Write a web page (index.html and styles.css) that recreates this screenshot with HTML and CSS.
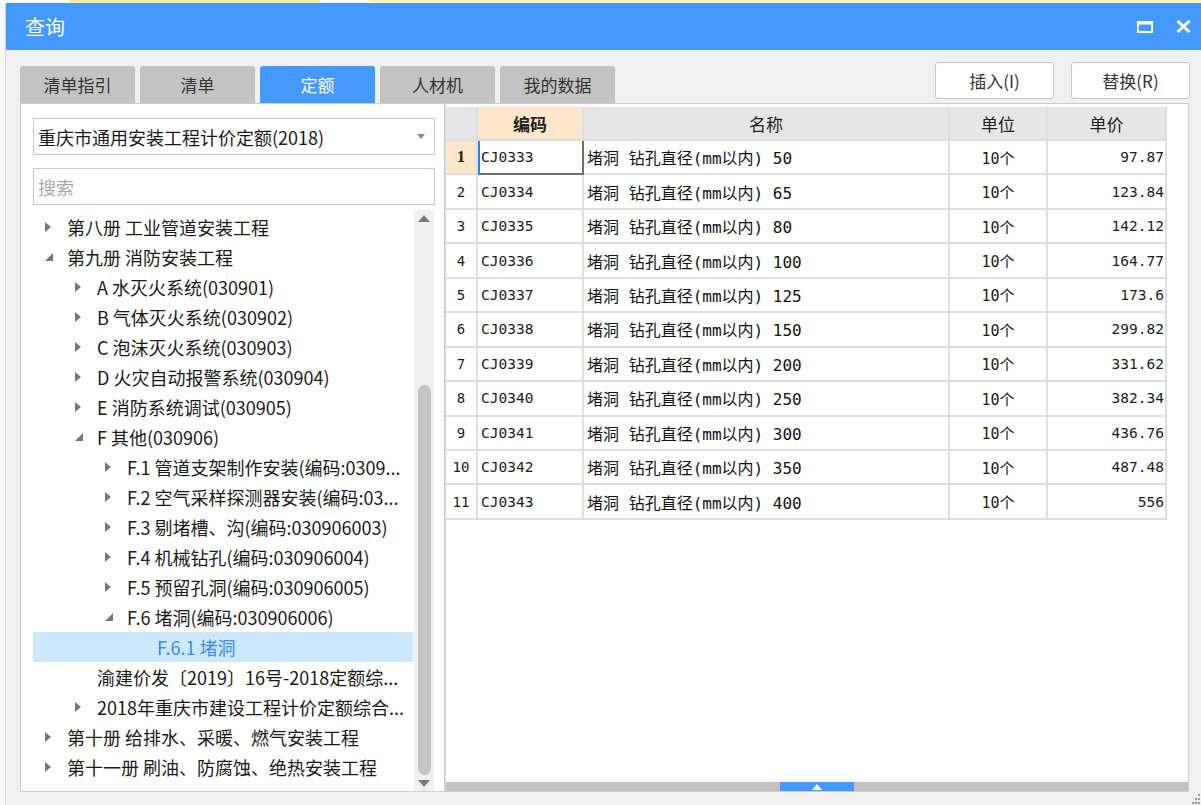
FILE: index.html
```html
<!DOCTYPE html>
<html lang="zh-CN">
<head>
<meta charset="utf-8">
<title>查询</title>
<link rel="stylesheet" href="styles.css">
</head>
<body>
<div class="topstrip"><span class="seg s1"></span><span class="seg s2"></span><span class="seg s3"></span><span class="seg s4"></span></div>
<div class="window">
  <div class="titlebar">
    <span class="title">查询</span>
    <div class="controls">
      <svg width="16" height="12" viewBox="0 0 16 12"><rect x="1" y="1.5" width="14" height="9.5" fill="none" stroke="#fff" stroke-width="2"/><rect x="0" y="0" width="16" height="3.5" fill="#fff"/></svg>
      <svg width="15" height="13" viewBox="0 0 15 13"><path d="M1.5 1 L13.5 12 M13.5 1 L1.5 12" stroke="#fff" stroke-width="3" fill="none"/></svg>
    </div>
  </div>
  <div class="main">
    <div class="toolbar">
      <div class="tabs">
        <div class="tab">清单指引</div>
        <div class="tab">清单</div>
        <div class="tab active">定额</div>
        <div class="tab">人材机</div>
        <div class="tab">我的数据</div>
      </div>
      <div class="buttons">
        <div class="btn">插入(I)</div>
        <div class="btn">替换(R)</div>
      </div>
    </div>
    <div class="panels">
      <div class="left">
        <div class="select"><span>重庆市通用安装工程计价定额(2018)</span><svg width="8" height="5" viewBox="0 0 8 5"><path d="M0 0 H8 L4 5 Z" fill="#888"/></svg></div>
        <div class="search">搜索</div>
        <div class="treewrap">
          <div class="tree">
            <div class="row l0"><span class="tw"><svg width="6" height="10" viewBox="0 0 6 10"><path d="M0 0 L6 5 L0 10 Z" fill="#777"/></svg></span><span class="tx">第八册 工业管道安装工程</span></div>
            <div class="row l0"><span class="tw"><svg width="8" height="8" viewBox="0 0 8 8"><path d="M8 0 V8 H0 Z" fill="#777"/></svg></span><span class="tx">第九册 消防安装工程</span></div>
            <div class="row l1"><span class="tw"><svg width="6" height="10" viewBox="0 0 6 10"><path d="M0 0 L6 5 L0 10 Z" fill="#777"/></svg></span><span class="tx">A 水灭火系统(030901)</span></div>
            <div class="row l1"><span class="tw"><svg width="6" height="10" viewBox="0 0 6 10"><path d="M0 0 L6 5 L0 10 Z" fill="#777"/></svg></span><span class="tx">B 气体灭火系统(030902)</span></div>
            <div class="row l1"><span class="tw"><svg width="6" height="10" viewBox="0 0 6 10"><path d="M0 0 L6 5 L0 10 Z" fill="#777"/></svg></span><span class="tx">C 泡沫灭火系统(030903)</span></div>
            <div class="row l1"><span class="tw"><svg width="6" height="10" viewBox="0 0 6 10"><path d="M0 0 L6 5 L0 10 Z" fill="#777"/></svg></span><span class="tx">D 火灾自动报警系统(030904)</span></div>
            <div class="row l1"><span class="tw"><svg width="6" height="10" viewBox="0 0 6 10"><path d="M0 0 L6 5 L0 10 Z" fill="#777"/></svg></span><span class="tx">E 消防系统调试(030905)</span></div>
            <div class="row l1"><span class="tw"><svg width="8" height="8" viewBox="0 0 8 8"><path d="M8 0 V8 H0 Z" fill="#777"/></svg></span><span class="tx">F 其他(030906)</span></div>
            <div class="row l2"><span class="tw"><svg width="6" height="10" viewBox="0 0 6 10"><path d="M0 0 L6 5 L0 10 Z" fill="#777"/></svg></span><span class="tx">F.1 管道支架制作安装(编码:0309...</span></div>
            <div class="row l2"><span class="tw"><svg width="6" height="10" viewBox="0 0 6 10"><path d="M0 0 L6 5 L0 10 Z" fill="#777"/></svg></span><span class="tx">F.2 空气采样探测器安装(编码:03...</span></div>
            <div class="row l2"><span class="tw"><svg width="6" height="10" viewBox="0 0 6 10"><path d="M0 0 L6 5 L0 10 Z" fill="#777"/></svg></span><span class="tx">F.3 剔堵槽、沟(编码:030906003)</span></div>
            <div class="row l2"><span class="tw"><svg width="6" height="10" viewBox="0 0 6 10"><path d="M0 0 L6 5 L0 10 Z" fill="#777"/></svg></span><span class="tx">F.4 机械钻孔(编码:030906004)</span></div>
            <div class="row l2"><span class="tw"><svg width="6" height="10" viewBox="0 0 6 10"><path d="M0 0 L6 5 L0 10 Z" fill="#777"/></svg></span><span class="tx">F.5 预留孔洞(编码:030906005)</span></div>
            <div class="row l2"><span class="tw"><svg width="8" height="8" viewBox="0 0 8 8"><path d="M8 0 V8 H0 Z" fill="#777"/></svg></span><span class="tx">F.6 堵洞(编码:030906006)</span></div>
            <div class="row l3 selected"><span class="tw"></span><span class="tx">F.6.1 堵洞</span></div>
            <div class="row l1"><span class="tw"></span><span class="tx">渝建价发〔2019〕16号-2018定额综...</span></div>
            <div class="row l1"><span class="tw"><svg width="6" height="10" viewBox="0 0 6 10"><path d="M0 0 L6 5 L0 10 Z" fill="#777"/></svg></span><span class="tx">2018年重庆市建设工程计价定额综合...</span></div>
            <div class="row l0"><span class="tw"><svg width="6" height="10" viewBox="0 0 6 10"><path d="M0 0 L6 5 L0 10 Z" fill="#777"/></svg></span><span class="tx">第十册 给排水、采暖、燃气安装工程</span></div>
            <div class="row l0"><span class="tw"><svg width="6" height="10" viewBox="0 0 6 10"><path d="M0 0 L6 5 L0 10 Z" fill="#777"/></svg></span><span class="tx">第十一册 刷油、防腐蚀、绝热安装工程</span></div>
          </div>
          <div class="vscroll">
            <svg class="sarrow" width="12" height="7" viewBox="0 0 12 7"><path d="M0 7 L6 0 L12 7 Z" fill="#7a7a7a"/></svg>
            <div class="thumb"></div>
            <svg class="sarrow down" width="12" height="7" viewBox="0 0 12 7"><path d="M0 0 L12 0 L6 7 Z" fill="#7a7a7a"/></svg>
          </div>
        </div>
      </div>
      <div class="right">
        <div class="grid">
          <div class="h rn"></div>
          <div class="h hl">编码</div>
          <div class="h">名称</div>
          <div class="h">单位</div>
          <div class="h">单价</div>

          <div class="c rn cur">1</div><div class="c code sel">CJ0333</div><div class="c name">堵洞 钻孔直径(mm以内) 50</div><div class="c unit">10个</div><div class="c price">97.87</div>
          <div class="c rn">2</div><div class="c code">CJ0334</div><div class="c name">堵洞 钻孔直径(mm以内) 65</div><div class="c unit">10个</div><div class="c price">123.84</div>
          <div class="c rn">3</div><div class="c code">CJ0335</div><div class="c name">堵洞 钻孔直径(mm以内) 80</div><div class="c unit">10个</div><div class="c price">142.12</div>
          <div class="c rn">4</div><div class="c code">CJ0336</div><div class="c name">堵洞 钻孔直径(mm以内) 100</div><div class="c unit">10个</div><div class="c price">164.77</div>
          <div class="c rn">5</div><div class="c code">CJ0337</div><div class="c name">堵洞 钻孔直径(mm以内) 125</div><div class="c unit">10个</div><div class="c price">173.6</div>
          <div class="c rn">6</div><div class="c code">CJ0338</div><div class="c name">堵洞 钻孔直径(mm以内) 150</div><div class="c unit">10个</div><div class="c price">299.82</div>
          <div class="c rn">7</div><div class="c code">CJ0339</div><div class="c name">堵洞 钻孔直径(mm以内) 200</div><div class="c unit">10个</div><div class="c price">331.62</div>
          <div class="c rn">8</div><div class="c code">CJ0340</div><div class="c name">堵洞 钻孔直径(mm以内) 250</div><div class="c unit">10个</div><div class="c price">382.34</div>
          <div class="c rn">9</div><div class="c code">CJ0341</div><div class="c name">堵洞 钻孔直径(mm以内) 300</div><div class="c unit">10个</div><div class="c price">436.76</div>
          <div class="c rn">10</div><div class="c code">CJ0342</div><div class="c name">堵洞 钻孔直径(mm以内) 350</div><div class="c unit">10个</div><div class="c price">487.48</div>
          <div class="c rn">11</div><div class="c code">CJ0343</div><div class="c name">堵洞 钻孔直径(mm以内) 400</div><div class="c unit">10个</div><div class="c price">556</div>
        </div>
        <div class="hscroll"><div class="splitter"><svg width="10" height="6" viewBox="0 0 10 6"><path d="M0 6 L5 0 L10 6 Z" fill="#fff"/></svg></div></div>
      </div>
    </div>
    <div class="status">
      <svg class="grip" width="8" height="10" viewBox="0 0 8 10"><g fill="#999"><rect x="6" y="0" width="2" height="2"/><rect x="3" y="4" width="2" height="2"/><rect x="6" y="4" width="2" height="2"/><rect x="0" y="8" width="2" height="2"/><rect x="3" y="8" width="2" height="2"/><rect x="6" y="8" width="2" height="2"/></g></svg>
    </div>
  </div>
</div>
</body>
</html>
```

FILE: styles.css
```css
* { box-sizing: border-box; }
html, body { margin: 0; padding: 0; }
body {
  width: 1201px;
  height: 805px;
  overflow: hidden;
  background: #f7f7f7;
  font-family: "Noto Sans CJK SC", "Noto Sans", sans-serif;
  color: #222;
}
.topstrip {
  height: 3px;
  display: flex;
  background: #fff6c8;
}
.topstrip .seg { height: 3px; }
.topstrip .s1 { width: 70px; background: #fff; }
.topstrip .s2 { width: 250px; background: #fbeaa0; }
.topstrip .s3 { width: 50px; background: #fff; }
.topstrip .s4 { flex: 1; background: #fff3b8; }

.window {
  margin-left: 5px;
  width: 1196px;
  height: 802px;
  background: #f0f0f0;
  border-left: 1px solid #d4d4d4;
  display: flex;
  flex-direction: column;
}
.titlebar {
  height: 47px;
  flex: none;
  background: #4499ff;
  display: flex;
  align-items: center;
  justify-content: space-between;
  padding: 0 10px 0 19px;
}
.title { color: #fff; font-size: 20px; line-height: 1; }
.controls { display: flex; align-items: center; gap: 23px; }
.controls svg { display: block; }

.main {
  flex: 1;
  display: flex;
  flex-direction: column;
  padding: 0 11px 0 14px;
  min-height: 0;
}
.toolbar {
  height: 53px;
  flex: none;
  display: flex;
  justify-content: space-between;
}
.tabs { display: flex; gap: 5px; align-self: flex-end; }
.tab {
  width: 115px;
  height: 37px;
  background: #c3c3c3;
  border-radius: 3px 3px 0 0;
  display: flex;
  align-items: center;
  justify-content: center;
  font-size: 17px;
  color: #333;
}
.tab.active { background: #4499ff; color: #fff; }
.buttons { display: flex; gap: 17px; margin-top: 12px; }
.btn {
  width: 119px;
  height: 37px;
  background: #fff;
  border: 1px solid #c6c6c6;
  border-radius: 3px;
  display: flex;
  align-items: center;
  justify-content: center;
  font-size: 17px;
  color: #333;
}

.panels {
  height: 689px;
  flex: none;
  display: flex;
}
.left {
  width: 425px;
  background: #fff;
  border: 1px solid #cdcdcd;
  padding: 14px 9px 0 12px;
  display: flex;
  flex-direction: column;
}
.select {
  height: 37px;
  flex: none;
  border: 1px solid #c8c8c8;
  display: flex;
  align-items: center;
  justify-content: space-between;
  padding: 0 9px 0 4px;
  font-size: 18px;
  color: #1a1a1a;
}
.select svg { display: block; }
.search {
  margin-top: 13px;
  height: 37px;
  flex: none;
  border: 1px solid #c8c8c8;
  display: flex;
  align-items: center;
  padding-left: 4px;
  font-size: 18px;
  color: #a8a8a8;
}
.treewrap {
  margin-top: 5px;
  flex: 1;
  min-height: 0;
  display: flex;
  overflow: hidden;
}
.tree { width: 380px; padding-top: 2px; overflow: hidden; }
.row {
  height: 30px;
  display: flex;
  align-items: center;
  font-size: 18px;
  color: #1a1a1a;
  white-space: nowrap;
  overflow: hidden;
}
.row .tw { width: 22px; flex: none; display: flex; align-items: center; }
.row .tw svg { display: block; }
.row.l0 { padding-left: 12px; }
.row.l1 { padding-left: 42px; }
.row.l2 { padding-left: 72px; }
.row.l3 { padding-left: 102px; }
.row.selected { background: #cce8ff; color: #3d8be6; }

.vscroll {
  width: 20px;
  margin-left: 1px;
  background: #efefef;
  display: flex;
  flex-direction: column;
  align-items: center;
  padding: 5px 0 4px;
}
.sarrow { display: block; flex: none; }
.thumb {
  margin-top: 163px;
  width: 13px;
  height: 390px;
  background: #c4c4c4;
  border-radius: 7px;
}
.sarrow.down { margin-top: auto; }

.right {
  width: 744px;
  background: #fff;
  border: 1px solid #cdcdcd;
  border-left: 1px solid #d8d8d8;
  padding-top: 3px;
  display: flex;
  flex-direction: column;
}
.grid {
  display: grid;
  grid-template-columns: 32px 106px 366px 98px 119px;
  grid-template-rows: 34px repeat(11, 34.45px);
  width: 721px;
  font-family: "DejaVu Sans Mono", "Noto Sans CJK SC", monospace;
  font-size: 14.5px;
  color: #1a1a1a;
}
.grid > div {
  border-right: 2px solid #dedede;
  border-bottom: 2px solid #dedede;
  display: flex;
  align-items: center;
  white-space: nowrap;
  overflow: hidden;
}
.grid .h {
  background: #e6e6e6;
  justify-content: center;
  font-family: "Noto Sans CJK SC", sans-serif;
  font-size: 17px;
  color: #222;
}
.grid .h.hl { background: #fde6c9; font-weight: bold; }
.grid .rn { justify-content: center; font-size: 14px; }
.grid .rn.cur { background: #fde6c9; font-weight: bold; font-size: 16px; font-family: "Liberation Serif", serif; }
.grid .code { padding-left: 3px; }
.grid .code.sel {
  border: 2px solid #6e6e6e;
  border-left: 2px solid #2b7ff0;
  border-top: 0;
  padding-left: 1px;
}
.grid .name { padding-left: 3px; font-size: 16px; color: #111; }
.grid .unit { justify-content: center; font-size: 15px; }
.grid .price { justify-content: flex-end; padding-right: 1px; }

.hscroll {
  margin-top: auto;
  height: 9px;
  background: #c2c2c2;
  display: flex;
  justify-content: center;
}
.splitter {
  width: 74px;
  height: 9px;
  background: #4499ff;
  display: flex;
  align-items: center;
  justify-content: center;
}
.splitter svg { display: block; }

.status {
  flex: 1;
  display: flex;
  justify-content: flex-end;
  align-items: flex-end;
  padding-bottom: 1px;
}
.grip { display: block; margin-right: -10px; }
```
